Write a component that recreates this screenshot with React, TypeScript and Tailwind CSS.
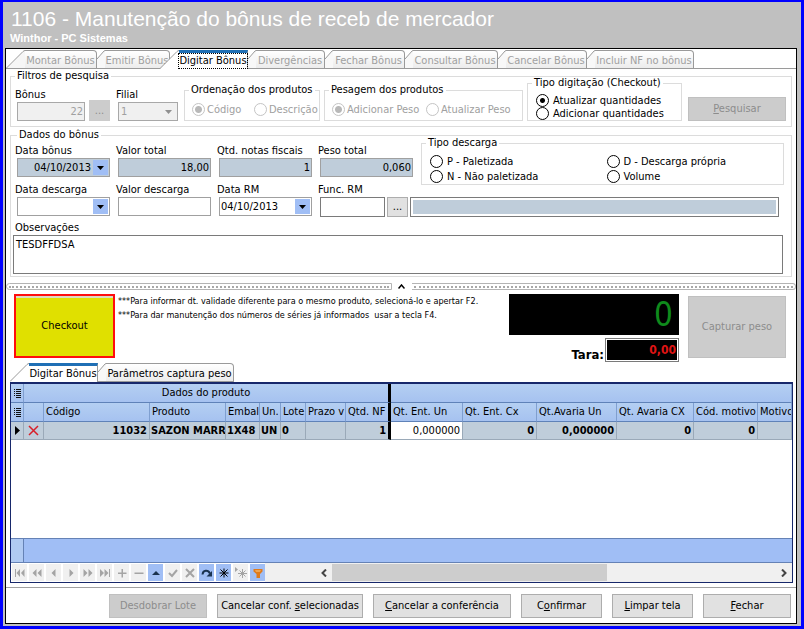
import type { ReactNode } from "react";
import clsx from "clsx";

const dots = "border-t-2 border-dotted border-[#a8a8a8]";

const mainTabs = [
  { label: "Montar Bônus", width: "w-[91px]", first: true },
  { label: "Emitir Bônus", width: "w-[73px]" },
  { label: "Digitar Bônus", width: "w-[78px]", active: true },
  { label: "Divergências", width: "w-[77px]" },
  { label: "Fechar Bônus", width: "w-[80px]" },
  { label: "Consultar Bônus", width: "w-[93px]" },
  { label: "Cancelar Bônus", width: "w-[89px]" },
  { label: "Incluir NF no bônus", width: "w-[107px]" },
];

type TabProps = {
  label: string;
  width: string;
  first?: boolean;
  active?: boolean;
  enabled?: boolean;
};

const Tab = ({ label, width, first, active, enabled }: TabProps) => {
  const wide = first || active;
  return (
    <button
      role="tab"
      aria-selected={!!active}
      disabled={!active && !enabled}
      className={clsx("relative flex h-[19px] shrink-0", width, active && "z-10")}
    >
      {wide ? (
        <svg
          className={clsx("h-[19px] w-[19px] shrink-0", active && !first && "-ml-[10px]")}
          viewBox="0 0 19 19"
          fill="none"
        >
          <path d="M0 19 L17 1.5 Q18 .5 19 .5 V19 Z" fill={active ? "#fff" : "#f6f6f6"} />
          <path d="M0 18.5 L17 1.5 Q18 .5 19 .5" stroke="#9a9a9a" />
          {!active && <path d="M0 18.5 H19" stroke="#9a9a9a" />}
        </svg>
      ) : (
        <svg className="h-[19px] w-2 shrink-0" viewBox="0 0 8 19" fill="none">
          <path d="M0 9 L7 1 L8 .5 V18 H0 Z" fill="#f8f8f8" />
          <path d="M0 9 L7 1 L8 .5 M0 18.5 H8" stroke="#9a9a9a" />
        </svg>
      )}
      <span
        className={clsx(
          "flex h-[19px] min-w-0 flex-1 items-center justify-center whitespace-nowrap border-r border-[#9a9a9a]",
          active && "border-t-[3px] border-t-[#1f6fb5] bg-white text-black",
          !active && "rounded-tr-sm border-t border-b bg-linear-to-b from-white to-[#ececec] pt-0.5",
          !active && (enabled ? "text-black" : "text-[#a0a0a0]"),
        )}
      >
        {active && !first ? (
          <span className="h-4 border border-dotted border-black leading-[14px]">{label}</span>
        ) : (
          label
        )}
      </span>
    </button>
  );
};

const Group = ({ title, className, children }: { title: string; className?: string; children: ReactNode }) => (
  <fieldset className={clsx("min-w-0 border border-[#dcdcdc]", className)}>
    <legend className="ml-1 px-0.5 leading-[14px]">{title}</legend>
    {children}
  </fieldset>
);

type RadioProps = { name: string; label: string; checked?: boolean; disabled?: boolean; className?: string };

const Radio = ({ name, label, checked, disabled, className }: RadioProps) => (
  <label className={clsx("flex items-center whitespace-nowrap", disabled ? "gap-0.5 text-[#a0a0a0]" : "gap-1", className)}>
    <input
      type="radio"
      name={name}
      defaultChecked={checked}
      disabled={disabled}
      className="size-[13px] shrink-0 appearance-none rounded-full border border-black bg-white checked:bg-[radial-gradient(circle,#000_2px,transparent_3px)] disabled:border-[#c4c4c4] disabled:checked:bg-[radial-gradient(circle,#b8b8b8_3px,transparent_4px)]"
    />
    {label}
  </label>
);

type FieldProps = {
  id: string;
  label: string;
  value?: string;
  filled?: boolean;
  date?: boolean;
  right?: boolean;
};

const Field = ({ id, label, value = "", filled, date, right }: FieldProps) => (
  <div className="w-[93px] shrink-0">
    <label htmlFor={id} className="-ml-0.5 block whitespace-nowrap leading-[14px]">
      {label}
    </label>
    <div className={clsx("flex h-[19px] border border-[#a0a0a0]", filled ? "bg-[#bfcdda]" : "bg-white")}>
      <input
        id={id}
        defaultValue={value}
        readOnly={filled}
        className={clsx("w-full min-w-0 flex-1 bg-transparent px-px", right && "text-right")}
      />
      {date && (
        <button aria-label={label} className="m-px flex w-[15px] shrink-0 items-center justify-center bg-[#a0bef5]">
          <Arrow />
        </button>
      )}
    </div>
  </div>
);

const Arrow = ({ className = "text-black" }: { className?: string }) => (
  <svg className={clsx("h-1 w-[7px]", className)} viewBox="0 0 7 4" fill="currentColor">
    <path d="M0 0H7L3.5 4Z" />
  </svg>
);

const Key = ({ children }: { children: string }) => <span className="underline">{children}</span>;

const Action = ({ width, disabled, children }: { width: string; disabled?: boolean; children: ReactNode }) => (
  <button
    disabled={disabled}
    className={clsx(
      "h-6 whitespace-nowrap border",
      disabled ? "border-[#c0c0c0] bg-[#cccccc] text-[#8c8c8c]" : "border-[#adadad] bg-[#e1e1e1]",
      width,
    )}
  >
    {children}
  </button>
);

const GridMark = () => (
  <svg className="mx-auto h-[9px] w-[7px]" viewBox="0 0 7 9" stroke="#111">
    <path d="M2 .5H7M2 2.5H7M2 4.5H7M2 6.5H7M2 8.5H7M0 .5H1M0 2.5H1M0 4.5H1M0 6.5H1" />
  </svg>
);

const columns = [
  { title: "Código", value: "11032", width: "w-[106px]", right: true },
  { title: "Produto", value: "SAZON MARR", width: "w-[76px]" },
  { title: "Embal", value: "1X48", width: "w-[34px]" },
  { title: "Un.", value: "UN", width: "w-[21px]" },
  { title: "Lote", value: "0", width: "w-[25px]" },
  { title: "Prazo v", value: "", width: "w-[40px]" },
  { title: "Qtd. NF", value: "1", width: "w-[45px]", right: true, last: true },
  { title: "Qt. Ent. Un", value: "0,000000", width: "w-[72px]", right: true, edit: true },
  { title: "Qt. Ent. Cx", value: "0", width: "w-[74px]", right: true },
  { title: "Qt.Avaria Un", value: "0,000000", width: "w-[80px]", right: true },
  { title: "Qt. Avaria CX", value: "0", width: "w-[77px]", right: true },
  { title: "Cód. motivo", value: "0", width: "w-[64px]", right: true },
  { title: "Motivo", value: "", width: "" },
];

const tools: { name: string; on?: boolean; icon: ReactNode }[] = [
  { name: "Primeiro", icon: <path d="M1 2h1v8H1zM6 2v8L2.5 6zM10.5 2v8L7 6z" /> },
  { name: "Página anterior", icon: <path d="M5.5 2v8L1.5 6zM10.5 2v8L6.5 6z" /> },
  { name: "Anterior", icon: <path d="M7.5 2v8L3.5 6z" /> },
  { name: "Próximo", icon: <path d="M4.5 2v8l4-4z" /> },
  { name: "Próxima página", icon: <path d="M1.5 2v8l4-4zM6.5 2v8l4-4z" /> },
  { name: "Último", icon: <path d="M1 2v8l4-4zM5.5 2v8l4-4zM10 2h1v8h-1z" /> },
  { name: "Inserir", icon: <path d="M5.5 2h1.500v3.500h3.500v1.500H7v3.500H5.500V7H2V5.500h3.500z" /> },
  { name: "Excluir", icon: <path d="M1.5 5.500h9v1.500h-9z" /> },
  { name: "Editar", on: true, icon: <path d="M2 8h8L6 4z" fill="#1b3350" /> },
  { name: "Gravar", icon: <path d="M2 6l3 3 5-6" fill="none" stroke="currentColor" strokeWidth="2" /> },
  { name: "Cancelar", icon: <path d="M2 2l8 8M10 2l-8 8" fill="none" stroke="currentColor" strokeWidth="2" /> },
  {
    name: "Atualizar",
    on: true,
    icon: (
      <>
        <path d="M1.5 7.5C2 3 7 2.500 9 6.500" fill="none" stroke="#1b3350" strokeWidth="2" />
        <path d="M11 4v5.500H5.500z" fill="#1b3350" />
      </>
    ),
  },
  {
    name: "Marcar",
    on: true,
    icon: <path d="M6 1.500v9M1.500 6h9M2.500 2.500l7 7M9.500 2.500l-7 7" fill="none" stroke="#000" />,
  },
  {
    name: "Ir para marca",
    icon: (
      <>
        <path d="M0 0v5l3-2.500z" />
        <path d="M7.500 2v9M3 6.500h9M4.500 3.500l6 6M10.500 3.500l-6 6" fill="none" stroke="currentColor" />
      </>
    ),
  },
  {
    name: "Filtrar",
    on: true,
    icon: (
      <>
        <path d="M1.500 2h9v2.500L8 7v4H4.500V7l-3-2.500z" fill="#e07b1c" />
        <path d="M3 3.500h6l-1 1H4z" fill="#ffd089" />
      </>
    ),
  },
];

const Filters = () => (
  <Group title="Filtros de pesquisa" className="pb-[5px]">
    <div className="flex items-end pr-[5px] pl-1.5">
      <div className="w-[68px]">
        <label htmlFor="bonus" className="-ml-0.5 block leading-[14px]">
          Bônus
        </label>
        <input
          id="bonus"
          disabled
          defaultValue="22"
          className="h-[19px] w-full border border-[#a8a8a8] bg-[#f0f0f0] px-px text-right text-[#a0a0a0]"
        />
      </div>
      <button disabled aria-label="Procurar bônus" className="ml-1 h-[21px] w-[21px] bg-[#cccccc] text-[#8c8c8c]">
        ...
      </button>
      <div className="ml-2 w-[60px]">
        <label htmlFor="filial" className="-ml-0.5 block leading-[14px]">
          Filial
        </label>
        <div className="relative">
          <select
            id="filial"
            disabled
            className="block h-[19px] w-full appearance-none border border-[#a8a8a8] bg-[#f0f0f0] px-0.5 text-[#a0a0a0] opacity-100"
          >
            <option>1</option>
          </select>
          <Arrow className="pointer-events-none absolute top-2 right-1.5 text-[#909090]" />
        </div>
      </div>
      <Group title="Ordenação dos produtos" className="ml-1.5 w-[136px] pt-1.5 pb-1">
        <div className="flex gap-3 pl-[7px]">
          <Radio name="ordem" label="Código" checked disabled className="h-[13px] w-[50px]" />
          <Radio name="ordem" label="Descrição" disabled className="h-[13px]" />
        </div>
      </Group>
      <Group title="Pesagem dos produtos" className="ml-1 w-[199px] pt-1.5 pb-1">
        <div className="flex gap-2 pl-[7px]">
          <Radio name="pesagem" label="Adicionar Peso" checked disabled className="h-[13px] w-[86px]" />
          <Radio name="pesagem" label="Atualizar Peso" disabled className="h-[13px]" />
        </div>
      </Group>
      <Group title="Tipo digitação (Checkout)" className="-mt-2 ml-1 w-[155px] pt-1">
        <div className="pl-2">
          <Radio name="digitacao" label="Atualizar quantidades" checked className="h-[13px]" />
          <Radio name="digitacao" label="Adicionar quantidades" className="h-[13px]" />
        </div>
      </Group>
      <div className="ml-auto">
        <Action width="w-[98px]" disabled>
          <Key>P</Key>esquisar
        </Action>
      </div>
    </div>
  </Group>
);

const BonusData = () => (
  <Group title="Dados do bônus" className="mt-px px-0.5 pb-0.5">
    <div className="flex items-start gap-2 pt-0.5 pr-[5px] pl-1">
      <Field id="data-bonus" label="Data bônus" value="04/10/2013" filled date right />
      <Field id="valor-total" label="Valor total" value="18,00" filled right />
      <Field id="notas" label="Qtd. notas fiscais" value="1" filled right />
      <Field id="peso" label="Peso total" value="0,060" filled right />
      <Group title="Tipo descarga" className="-mt-2 -mb-2 flex-1 pt-1">
        <div className="grid grid-cols-2 pl-2">
          <Radio name="descarga" label="P - Paletizada" className="h-[15px]" />
          <Radio name="descarga" label="D - Descarga própria" className="h-[15px]" />
          <Radio name="descarga" label="N - Não paletizada" className="h-[15px]" />
          <Radio name="descarga" label="Volume" className="h-[15px]" />
        </div>
      </Group>
    </div>
    <div className="mt-1.5 flex items-start gap-2 pr-2.5 pl-1">
      <Field id="data-descarga" label="Data descarga" date />
      <Field id="valor-descarga" label="Valor descarga" />
      <Field id="data-rm" label="Data RM" value="04/10/2013" date />
      <div className="flex-1">
        <label htmlFor="func-rm" className="-ml-0.5 block leading-[14px]">
          Func. RM
        </label>
        <div className="flex h-5 gap-0.5">
          <input id="func-rm" className="w-[65px] border border-[#7a7a7a] bg-white px-0.5" />
          <button aria-label="Procurar funcionário" className="w-[21px] border border-[#adadad] bg-[#e1e1e1]">
            ...
          </button>
          <input
            aria-label="Nome do funcionário"
            readOnly
            className="min-w-0 flex-1 border border-[#7a7a7a] bg-[#bfcdda] ring-2 ring-white ring-inset"
          />
        </div>
      </div>
    </div>
    <label htmlFor="obs" className="mt-1 block pl-0.5 leading-[14px]">
      Observações
    </label>
    <div className="pr-1.5">
      <textarea
        id="obs"
        defaultValue="TESDFFDSA"
        className="block h-[39px] w-full resize-none border border-[#7a7a7a] bg-white px-0.5 py-0.5"
      />
    </div>
  </Group>
);

const Splitter = () => (
  <div className="mt-1.5 flex h-[7px] items-stretch">
    <div className="flex flex-1 items-center rounded-l border border-[#b4b4b4] px-0.5">
      <div className={clsx("w-full", dots)} />
    </div>
    <button aria-label="Recolher" className="flex w-5 items-center justify-center">
      <svg className="h-[5px] w-[7px]" viewBox="0 0 7 5" fill="none" stroke="#000" strokeWidth="1.500">
        <path d="M.5 4.500L3.500 1L6.500 4.500" />
      </svg>
    </button>
    <div className="flex flex-1 items-center rounded-r border border-l-0 border-[#b4b4b4] px-0.5">
      <div className={clsx("w-full", dots)} />
    </div>
  </div>
);

const Checkout = () => (
  <div className="flex items-start pt-1 pr-2.5 pl-2">
    <button className="h-[64px] w-[101px] shrink-0 border-2 border-[#ff0d0d] bg-[#e0e000] shadow-[inset_0_2px_0_#dcdcc0]">
      Checkout
    </button>
    <div className="ml-[3px] text-[9px] leading-[14px] whitespace-nowrap">
      <p>***Para informar dt. validade diferente para o mesmo produto, selecioná-lo e apertar F2.</p>
      <p>***Para dar manutenção dos números de séries já informados &nbsp;usar a tecla F4.</p>
    </div>
    <div className="ml-auto w-[170px] shrink-0">
      <output
        aria-label="Peso"
        className="flex h-[41px] items-center justify-end bg-black pr-1.5 text-[33px] text-[#0f8a1c]"
      >
        0
      </output>
      <div className="mt-[3px] flex items-end justify-end gap-px">
        <label htmlFor="tara" className="text-[13px] font-bold">
          Tara:
        </label>
        <div className="border border-[#7a7a7a] bg-white p-px">
          <input
            id="tara"
            defaultValue="0,00"
            className="block h-5 w-[70px] bg-black px-px text-right text-[12px] font-bold text-[#e01414]"
          />
        </div>
      </div>
    </div>
    <button disabled className="mt-0.5 ml-[9px] h-[62px] w-[98px] shrink-0 border border-[#c0c0c0] bg-[#cccccc] text-[#8c8c8c]">
      Capturar peso
    </button>
  </div>
);

const head = "h-[19px] overflow-hidden border-r border-b border-[#7f9fd0] border-b-[#5f82b8] bg-linear-to-b from-[#b4cff2] to-[#a6c2f0] p-0 font-normal";
const cell = "h-[18px] overflow-hidden whitespace-nowrap border-r border-b border-[#9aa9b8] bg-[#bfcdda] py-0";

const Grid = () => (
  <div className="flex flex-1 flex-col border border-t-2 border-[#17286b] bg-white">
    <table className="w-full table-fixed border-separate border-spacing-0">
      <colgroup>
        <col className="w-[13px]" />
        <col className="w-5" />
        {columns.map((c) => (
          <col key={c.title} className={c.width} />
        ))}
      </colgroup>
      <thead>
        <tr>
          <th className={head}>
            <GridMark />
          </th>
          <th colSpan={8} className={clsx(head, "border-r-[3px] border-r-black")}>
            Dados do produto
          </th>
          <th colSpan={6} className={head} />
        </tr>
        <tr>
          <th className={head}>
            <GridMark />
          </th>
          <th className={head} />
          {columns.map((c) => (
            <th
              key={c.title}
              className={clsx(head, "pl-0.5 text-left whitespace-nowrap", c.last && "border-r-[3px] border-r-black")}
            >
              {c.title}
            </th>
          ))}
        </tr>
      </thead>
      <tbody>
        <tr className="font-bold">
          <td className={cell}>
            <svg className="mx-auto h-[9px] w-[5px]" viewBox="0 0 5 9">
              <path d="M0 0V9L5 4.500Z" />
            </svg>
          </td>
          <td className={cell}>
            <svg className="mx-auto size-[11px]" viewBox="0 0 11 11" stroke="#d8202a" strokeWidth="1.500">
              <path d="M1 1L10 10M10 1L1 10" />
            </svg>
          </td>
          {columns.map((c) => (
            <td
              key={c.title}
              className={clsx(
                cell,
                c.right ? "pr-0.5 text-right" : "pl-px",
                c.last && "border-r-[3px] border-r-black",
                c.edit && "bg-white! font-normal",
              )}
            >
              {c.value}
            </td>
          ))}
        </tr>
      </tbody>
    </table>
    <div className="mt-auto flex h-[25px] border-y border-[#6582b5] bg-[#a0bef5]">
      <div className="w-[13px] border-r border-[#6582b5] bg-[#b0caf2]" />
    </div>
    <div className="flex h-[19px] items-center bg-[#f0f0f0]">
      <div className="flex gap-0.5 bg-white py-px pl-px">
        {tools.map((t) => (
          <button
            key={t.name}
            aria-label={t.name}
            className={clsx(
              "flex h-[17px] w-[15px] items-center justify-center text-[#a4a4a4]",
              t.on ? "bg-[#a0bef5]" : "bg-[#f0f0f0]",
            )}
          >
            <svg className="size-3 overflow-visible" viewBox="0 0 12 12" fill="currentColor">
              {t.icon}
            </svg>
          </button>
        ))}
      </div>
      <div className="ml-[50px] flex h-[17px] flex-1 items-center">
        <button aria-label="Rolar para a esquerda" className="flex w-[17px] justify-center">
          <svg className="h-2 w-1.5" viewBox="0 0 6 8" fill="none" stroke="#444" strokeWidth="2">
            <path d="M5 .5L1.500 4L5 7.500" />
          </svg>
        </button>
        <div className="h-full flex-1">
          <div className="h-full w-[62%] bg-[#cdcdcd]" />
        </div>
        <button aria-label="Rolar para a direita" className="flex w-[17px] justify-center">
          <svg className="h-2 w-1.5" viewBox="0 0 6 8" fill="none" stroke="#444" strokeWidth="2">
            <path d="M1 .5L4.500 4L1 7.500" />
          </svg>
        </button>
      </div>
    </div>
  </div>
);

export default function App() {
  return (
    <div className="flex min-h-screen flex-col border-[3px] border-t-2 border-[#0000ff] bg-[#c0c0c0] font-['DejaVu_Sans_Condensed','DejaVu_Sans',sans-serif] text-[11px] leading-[14px] text-black">
      <header className="h-[46px] pt-1 pl-2 font-['Liberation_Sans',Arial,sans-serif] text-white">
        <h1 className="text-[21px] leading-[26px]">1106 - Manutenção do bônus de receb de mercador</h1>
        <p className="-ml-px text-[11px] leading-3 font-bold">Winthor - PC Sistemas</p>
      </header>
      <main className="mr-1 mb-0.5 ml-0.5 flex flex-1 flex-col border border-black bg-white">
        <div role="tablist" className="flex pt-px">
          {mainTabs.map((tab) => (
            <Tab key={tab.label} {...tab} />
          ))}
          <div className="flex-1 border-b border-[#9a9a9a]" />
        </div>
        <div className="pr-1 pl-1">
          <Filters />
          <BonusData />
        </div>
        <Splitter />
        <Checkout />
        <div className="mt-px flex flex-1 flex-col pr-[3px] pl-1">
          <div role="tablist" className="flex">
            <Tab label="Digitar Bônus" width="w-[88px]" first active />
            <Tab label="Parâmetros captura peso" width="w-[136px]" enabled />
          </div>
          <Grid />
        </div>
        <footer className="mt-1 flex justify-end gap-2.5 border-t border-[#a0a0a0] pt-1.5 pr-[5px] pb-[5px]">
          <Action width="w-[98px]" disabled>
            Desdobrar Lote
          </Action>
          <Action width="w-[146px]">
            Cancelar conf. <Key>s</Key>elecionadas
          </Action>
          <Action width="w-[138px]">
            <Key>C</Key>ancelar a conferência
          </Action>
          <Action width="w-[81px]">
            C<Key>o</Key>nfirmar
          </Action>
          <Action width="w-[81px]">
            <Key>L</Key>impar tela
          </Action>
          <Action width="w-[88px]">
            <Key>F</Key>echar
          </Action>
        </footer>
      </main>
    </div>
  );
}
